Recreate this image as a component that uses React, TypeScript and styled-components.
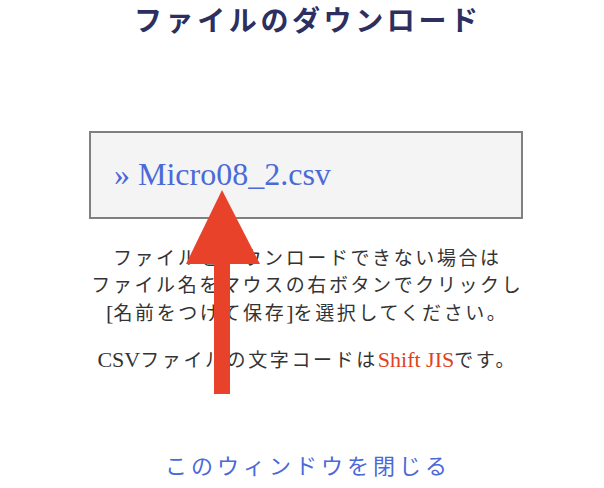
import React from "react";
import styled, { createGlobalStyle } from "styled-components";

const Global = createGlobalStyle`
  html, body { margin: 0; padding: 0; background: #ffffff; }
  body {
    padding-left: 8px;
    font-family: "Liberation Serif", "Noto Sans CJK JP", serif;
    color: #333333;
  }
`;

const Page = styled.div`
  position: relative;
  width: 596px;
  height: 488px;
  display: flex;
  flex-direction: column;
  align-items: center;
`;

const Title = styled.h1`
  margin: 3px 0 0;
  font-size: 28px;
  line-height: 38px;
  font-weight: 700;
  letter-spacing: 3.6px;
  padding-left: 3.6px;
  color: #2c2f5f;
`;

const FileBox = styled.div`
  box-sizing: border-box;
  margin-top: 90px;
  width: 434px;
  height: 88px;
  border: 2px solid #808080;
  background: #f4f4f4;
  display: flex;
  align-items: center;
  padding-left: 23px;
`;

const FileLink = styled.a`
  font-family: "Liberation Serif", serif;
  font-size: 32px;
  line-height: 40px;
  color: #4a6ad8;
  text-decoration: none;
  margin-top: -2px;
`;

const Note = styled.p<{ $gap: number }>`
  margin: ${(p) => p.$gap}px 0 0;
  font-size: 19px;
  line-height: 27px;
  letter-spacing: 2.6px;
  padding-left: 2.6px;
  text-align: center;
  color: #333333;
`;

const Latin = styled.span<{ $accent?: boolean }>`
  font-size: 22px;
  letter-spacing: 0;
  color: ${(p) => (p.$accent ? "#e0421f" : "inherit")};
`;

const CloseLink = styled.a`
  margin-top: 78px;
  font-size: 22px;
  line-height: 30px;
  letter-spacing: 4px;
  padding-left: 4px;
  color: #4a6ad8;
  text-decoration: none;
`;

const Arrow = styled.svg`
  position: absolute;
  left: 178px;
  top: 190px;
  width: 74px;
  height: 204px;
  pointer-events: none;
`;

export default function App() {
  return (
    <>
      <Global />
      <Page>
        <Title>ファイルのダウンロード</Title>
        <FileBox>
          <FileLink href="#">» Micro08_2.csv</FileLink>
        </FileBox>
        <Note $gap={26}>
          ファイルをダウンロードできない場合は
          <br />
          ファイル名をマウスの右ボタンでクリックし
          <br />
          <Latin>[</Latin>名前をつけて保存<Latin>]</Latin>を選択してください。
        </Note>
        <Note $gap={19}>
          <Latin>CSV</Latin>ファイルの文字コードは<Latin $accent>Shift JIS</Latin>です。
        </Note>
        <CloseLink href="#">このウィンドウを閉じる</CloseLink>
        <Arrow viewBox="0 0 74 204">
          <polygon points="36,0 74,74 0,74" fill="#e8432a" />
          <rect x="28" y="73" width="16" height="131" fill="#e8432a" />
        </Arrow>
      </Page>
    </>
  );
}
